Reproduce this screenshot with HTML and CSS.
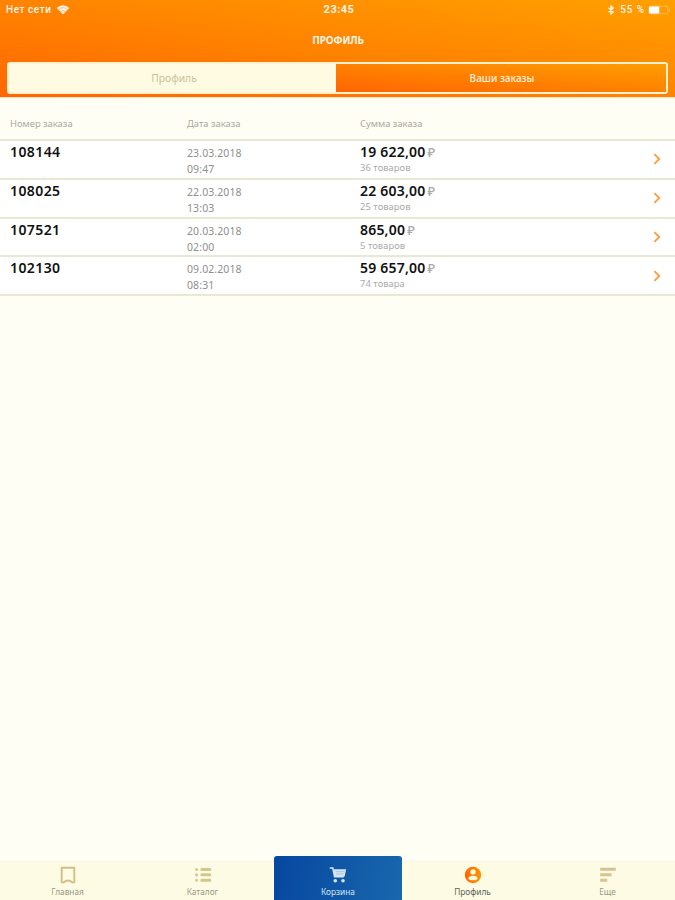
FILE: index.html
```html
<!DOCTYPE html>
<html lang="ru">
<head>
<meta charset="utf-8">
<title>Профиль</title>
<link rel="stylesheet" href="styles.css">
</head>
<body>
<div class="app">
  <header class="header">
    <div class="status">
      <div class="status-left">
        <span class="network">Нет сети</span>
        <svg class="wifi" width="14" height="10" viewBox="0 0 14 10"><path d="M7 9.6L.7 3.1Q7-2.4 13.3 3.1Z" fill="#fff3e6"/><path d="M2.4 4.5Q7 .9 11.6 4.5M4.3 6.6Q7 4.5 9.7 6.6" fill="none" stroke="#ff9a3c" stroke-width=".6"/></svg>
      </div>
      <span class="clock">23:45</span>
      <div class="status-right">
        <svg width="8" height="10" viewBox="0 0 8 10"><path d="M1.5 2.8L6.2 7 4 9V1l2.2 2L1.5 7.2" fill="none" stroke="#fff3e6" stroke-width="1.4"/></svg>
        <span class="percent">55 %</span>
        <svg class="battery" width="23" height="10" viewBox="0 0 23 10"><rect x=".9" y="1.2" width="19" height="7.6" rx="1.4" fill="none" stroke="#ffc370" stroke-width=".8"/><rect x="1" y="1.5" width="10.3" height="7" rx=".8" fill="#fff"/><path d="M21.2 3.4q1.7 1.6 0 3.2z" fill="#ffd79c"/></svg>
      </div>
    </div>
    <h1 class="title">ПРОФИЛЬ</h1>
    <div class="tabs">
      <div class="tab"><span>Профиль</span></div>
      <div class="tab tab-active"><span>Ваши заказы</span></div>
    </div>
  </header>
  <main class="orders">
    <div class="row head">
      <span>Номер заказа</span><span>Дата заказа</span><span>Сумма заказа</span>
    </div>
    <div class="row order">
      <div class="number">108144</div>
      <div class="date">23.03.2018<br>09:47</div>
      <div class="sum"><div class="price">19 622,00<span class="rub">₽</span></div><div class="count">36 товаров</div></div>
      <svg class="chevron" width="8" height="12" viewBox="0 0 8 12"><path d="M1.4 1.2L6.2 6 1.4 10.8"/></svg>
    </div>
    <div class="row order">
      <div class="number">108025</div>
      <div class="date">22.03.2018<br>13:03</div>
      <div class="sum"><div class="price">22 603,00<span class="rub">₽</span></div><div class="count">25 товаров</div></div>
      <svg class="chevron" width="8" height="12" viewBox="0 0 8 12"><path d="M1.4 1.2L6.2 6 1.4 10.8"/></svg>
    </div>
    <div class="row order">
      <div class="number">107521</div>
      <div class="date">20.03.2018<br>02:00</div>
      <div class="sum"><div class="price">865,00<span class="rub">₽</span></div><div class="count">5 товаров</div></div>
      <svg class="chevron" width="8" height="12" viewBox="0 0 8 12"><path d="M1.4 1.2L6.2 6 1.4 10.8"/></svg>
    </div>
    <div class="row order">
      <div class="number">102130</div>
      <div class="date">09.02.2018<br>08:31</div>
      <div class="sum"><div class="price">59 657,00<span class="rub">₽</span></div><div class="count">74 товара</div></div>
      <svg class="chevron" width="8" height="12" viewBox="0 0 8 12"><path d="M1.4 1.2L6.2 6 1.4 10.8"/></svg>
    </div>
  </main>
  <nav class="nav">
    <div class="item">
      <svg width="18" height="18" viewBox="0 0 18 18"><path d="M2.7 1.8h12.6v14.6h-1.8Q9 12.8 4.5 16.4H2.7z" fill="none" stroke="#d3bf85" stroke-width="1.9" stroke-linejoin="round"/></svg>
      <span>Главная</span>
    </div>
    <div class="item">
      <svg width="18" height="18" viewBox="0 0 18 18"><path d="M2.6 3.4v.1M2.6 8.8v.1M2.6 14.2v.1M7.8 3.4h8M7.8 8.8h8M7.8 14.2h8" fill="none" stroke="#d3c78b" stroke-width="3" stroke-linecap="round"/></svg>
      <span>Каталог</span>
    </div>
    <div class="item cart">
      <svg width="18" height="18" viewBox="0 0 18 18"><path d="M.8 2h3l1.8 8.7h9.2" fill="none" stroke="#d7e6f4" stroke-width="1.5"/><path d="M4.2 3.2h13l-1.6 7.2H5.6z" fill="#d7e6f4"/><path d="M6.5 5.7h8.8M7 8h7.8" stroke="#89add1" stroke-width=".6"/><circle cx="6.3" cy="14.8" r="1.8" fill="#d7e6f4"/><circle cx="14" cy="14.8" r="1.8" fill="#d7e6f4"/></svg>
      <span>Корзина</span>
    </div>
    <div class="item current">
      <svg width="18" height="18" viewBox="0 0 18 18"><defs><linearGradient id="g"><stop stop-color="#ff6500"/><stop offset="1" stop-color="#ff9500"/></linearGradient></defs><circle cx="9" cy="9" r="8.2" fill="url(#g)"/><circle cx="9" cy="5.9" r="2.7" fill="#fffbe2"/><path d="M4.5 12.2Q4.5 9.7 9 9.7t4.5 2.5q0 2-4.5 2t-4.5-2z" fill="#fffbe2"/></svg>
      <span>Профиль</span>
    </div>
    <div class="item">
      <svg width="18" height="18" viewBox="0 0 18 18"><path d="M1.2 3.3h15.6M1.2 8.8h11.4M1.2 14.3h7" fill="none" stroke="#d5c391" stroke-width="3"/></svg>
      <span>Еще</span>
    </div>
  </nav>
</div>
</body>
</html>
```

FILE: styles.css
```css
* { box-sizing: border-box; }
body { margin: 0; font-family: "Noto Sans", "Open Sans", sans-serif; }
.app { width: 675px; height: 900px; display: flex; flex-direction: column; background: #fffef4; overflow: hidden; }
.header { height: 97px; flex: none; padding: 0 7px; background: linear-gradient(to top right, #ff6600 0%, #ff8400 50%, #ffa000 100%); box-shadow: 0 1px 1px #ffe6ca; }
.status { height: 20px; display: grid; grid-template-columns: 1fr auto 1fr; align-items: center; color: #fff3e6; font: 10px/20px Roboto, sans-serif; margin: 0 -7px; }
.status-left { display: flex; align-items: center; gap: 5px; padding-left: 6px; }
.network { letter-spacing: .55px; font-weight: 500; }
.clock { font-size: 11px; font-weight: 700; letter-spacing: .5px; padding-left: 3px; }
.status-right { display: flex; align-items: center; justify-content: flex-end; padding-right: 4px; }
.percent { margin: 0 3px 0 5px; letter-spacing: .9px; font-weight: 500; }
.title { margin: 0; height: 42px; font: 700 10px/40px "Noto Sans", sans-serif; text-align: center; color: #fff5e8; letter-spacing: -.1px; padding-left: 1px; }
.tabs { height: 32px; display: flex; border: 2px solid #fff0cf; border-radius: 3px; background: #fffae2; }
.tab { flex: 1; display: flex; align-items: center; justify-content: center; font-size: 10.3px; color: #c9c39a; }
.tab:first-child { flex: 0 0 327px; padding-left: 3px; }
.tab-active { color: #fff1dd; background: linear-gradient(to top right, #ff6500, #ff9e00); font-size: 10px; font-weight: 500; padding-left: 2px; }
.orders { flex: 1; }
.row { display: grid; grid-template-columns: 177px 173px 1fr 8px; padding: 0 14px 0 10px; }
.head { height: 42px; padding-top: 19px; font-size: 9.4px; line-height: 15px; color: #aaa99f; }
.order { height: 38.75px; border-top: 2px solid #e8e9d3; background: #fff; color: #8f8f8f; }
.order:last-child { height: 40.75px; border-bottom: 2px solid #e8e9d3; }
.number, .price { font-size: 14px; line-height: 18px; font-weight: 600; color: #111; letter-spacing: .4px; padding-top: 2px; }
.date { font-size: 10.5px; line-height: 16px; padding-top: 4px; letter-spacing: .1px; }
.price { letter-spacing: .2px; white-space: nowrap; }
.rub { font-size: 13px; font-weight: 500; color: #aaa; margin-left: 2px; letter-spacing: 0; }
.count { font-size: 9.4px; line-height: 14px; color: #aaa; letter-spacing: .05px; }
.chevron { align-self: center; fill: none; stroke: #ff9b3e; stroke-width: 1.8; }
.nav { height: 38px; flex: none; display: grid; grid-template-columns: repeat(5, 1fr); background: #fdfbe4; box-shadow: 0 -1px 1px #f8f7e6; }
.item { display: flex; flex-direction: column; align-items: center; padding-top: 4px; font-size: 8.3px; color: #999887; }
.item svg { flex: none; }
.item span { line-height: 13px; margin-top: 1px; }
.cart { width: 128px; height: 44px; margin: -6px auto 0; padding-top: 10px; border-radius: 3px 3px 0 0; background: linear-gradient(100deg, #0647a0, #1967ad); color: #d7e5f5; position: relative; left: .5px; }
.current { color: #626256; }
```
